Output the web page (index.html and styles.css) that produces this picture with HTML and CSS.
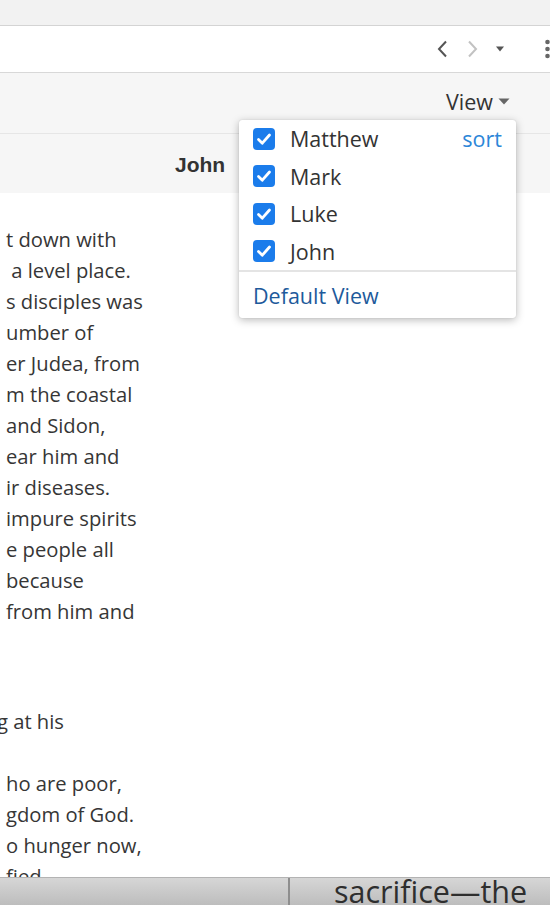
FILE: index.html
```html
<!DOCTYPE html>
<html lang="en">
<head>
<meta charset="utf-8">
<title>Parallel Gospels</title>
<link rel="stylesheet" href="styles.css">
</head>
<body>
<div class="page">
  <div class="topband"></div>
  <div class="toolbar">
    <svg class="nav-prev" width="14" height="18" viewBox="0 0 14 18"><path d="M11 1.5 L4 9 L11 16.5" fill="none" stroke="#555" stroke-width="2"/></svg>
    <svg class="nav-next" width="14" height="18" viewBox="0 0 14 18"><path d="M3 1.5 L10 9 L3 16.5" fill="none" stroke="#c2c2c2" stroke-width="2"/></svg>
    <svg class="nav-caret" width="10" height="6" viewBox="0 0 10 6"><path d="M1 0.5 H9 L5 5.5 Z" fill="#555"/></svg>
    <svg class="kebab" width="6" height="20" viewBox="0 0 6 20"><circle cx="3.5" cy="3" r="2.3" fill="#666"/><circle cx="3.5" cy="10" r="2.3" fill="#666"/><circle cx="3.5" cy="17" r="2.3" fill="#666"/></svg>
  </div>
  <div class="viewbar">
    <button class="view-btn">View <svg width="12" height="7" viewBox="0 0 12 7"><path d="M0.5 0.5 H11.5 L6 6.5 Z" fill="#666"/></svg></button>
    <div class="menu">
      <ul class="menu-list">
        <li class="menu-item"><span class="check"><svg width="22" height="22" viewBox="0 0 22 22"><path d="M5.5 11.5 L9.3 15.2 L16.5 7" fill="none" stroke="#fff" stroke-width="2.8" stroke-linecap="round" stroke-linejoin="round"/></svg></span><span class="label">Matthew</span><a class="sort">sort</a></li>
        <li class="menu-item"><span class="check"><svg width="22" height="22" viewBox="0 0 22 22"><path d="M5.5 11.5 L9.3 15.2 L16.5 7" fill="none" stroke="#fff" stroke-width="2.8" stroke-linecap="round" stroke-linejoin="round"/></svg></span><span class="label">Mark</span></li>
        <li class="menu-item"><span class="check"><svg width="22" height="22" viewBox="0 0 22 22"><path d="M5.5 11.5 L9.3 15.2 L16.5 7" fill="none" stroke="#fff" stroke-width="2.8" stroke-linecap="round" stroke-linejoin="round"/></svg></span><span class="label">Luke</span></li>
        <li class="menu-item"><span class="check"><svg width="22" height="22" viewBox="0 0 22 22"><path d="M5.5 11.5 L9.3 15.2 L16.5 7" fill="none" stroke="#fff" stroke-width="2.8" stroke-linecap="round" stroke-linejoin="round"/></svg></span><span class="label">John</span></li>
      </ul>
      <div class="menu-footer"><a class="default-view">Default View</a></div>
    </div>
  </div>
  <div class="colhead">
    <div class="colhead-cell"></div>
    <div class="colhead-cell colhead-john">John</div>
  </div>
  <main class="content">
    <div class="col col-luke">
      <p class="para"><span class="ln">t down with</span><span class="ln"> a level place.</span><span class="ln">s disciples was</span><span class="ln">umber of</span><span class="ln">er Judea, from</span><span class="ln">m the coastal</span><span class="ln">and Sidon,</span><span class="ln">ear him and</span><span class="ln">ir diseases.</span><span class="ln">impure spirits</span><span class="ln">e people all</span><span class="ln">because</span><span class="ln">from him and</span><span class="ln"></span></p>
      <p class="para"><span class="ln ln-cut">g at his</span><span class="ln"></span><span class="ln">ho are poor,</span><span class="ln">gdom of God.</span><span class="ln">o hunger now,</span><span class="ln">fied</span></p>
    </div>
    <div class="col col-john"></div>
  </main>
</div>
<div class="dock">
  <div class="dock-left"></div>
  <div class="dock-right">sacrifice—the</div>
</div>
</body>
</html>
```
FILE: styles.css
```css
* { box-sizing: border-box; }
html, body { margin: 0; padding: 0; }
body {
  width: 550px;
  height: 905px;
  overflow: hidden;
  font-family: "Open Sans", "Noto Sans", sans-serif;
  color: #333;
  background: #fff;
}
.page {
  height: 877px;
  overflow: hidden;
  display: flex;
  flex-direction: column;
}
.topband {
  height: 26px;
  flex: none;
  background: #f2f2f2;
  border-bottom: 1px solid #d4d4d4;
}
.toolbar {
  height: 47px;
  flex: none;
  background: #fff;
  border-bottom: 1px solid #d8d8d8;
  display: flex;
  align-items: center;
  justify-content: flex-end;
  box-shadow: 0 1px 1px rgba(0,0,0,0.04);
}
.nav-prev { margin-right: 17px; }
.nav-next { margin-right: 15px; }
.nav-caret { margin-right: 39px; }
.kebab { display: block; }
.viewbar {
  position: relative;
  height: 61px;
  flex: none;
  background: #f6f6f6;
  border-bottom: 1px solid #e6e6e6;
  display: flex;
  align-items: center;
  justify-content: flex-end;
  padding-right: 40px;
}
.view-btn {
  font-family: "Open Sans", sans-serif;
  font-size: 21.5px;
  color: #333;
  background: none;
  border: 0;
  padding: 0;
  display: flex;
  align-items: center;
  gap: 5px;
  margin-top: -4px;
}
.view-btn svg { margin-top: 1px; }
.menu {
  position: absolute;
  top: 47px;
  right: 34px;
  width: 277px;
  background: #fff;
  border-radius: 3px;
  box-shadow: 0 2px 8px rgba(0,0,0,0.28), 0 0 1px rgba(0,0,0,0.2);
  z-index: 5;
}
.menu-list {
  list-style: none;
  margin: 0;
  padding: 0;
  border-bottom: 2px solid #e4e4e4;
}
.menu-item {
  height: 37.5px;
  display: flex;
  align-items: center;
  padding: 0 14px;
  font-size: 21.5px;
  color: #333;
}
.check {
  width: 22px;
  height: 22px;
  border-radius: 4px;
  background: #1b7ceb;
  display: block;
  margin-right: 15px;
  flex: none;
}
.check svg { display: block; }
.label { flex: 1; }
.sort {
  color: #2c86d8;
  font-size: 21.5px;
}
.menu-footer {
  height: 46px;
  display: flex;
  align-items: center;
  padding: 0 14px;
}
.default-view {
  color: #1d5a9b;
  font-size: 21.5px;
}
.colhead {
  height: 59px;
  flex: none;
  background: #f6f6f6;
  display: grid;
  grid-template-columns: 150px 1fr;
  align-items: center;
}
.colhead-john {
  font-family: "Liberation Sans", Arial, sans-serif;
  font-weight: bold;
  font-size: 21px;
  color: #333;
  padding-left: 25px;
  margin-top: 2px;
}
.content {
  flex: 1;
  display: grid;
  grid-template-columns: 150px 1fr;
  padding-top: 31px;
}
.col-luke {
  font-size: 20.2px;
  color: #363636;
  padding-left: 6px;
}
.para {
  margin: 0 0 48px 0;
}
.ln {
  display: block;
  white-space: pre;
  height: 31px;
  line-height: 31px;
}
.ln-cut { margin-left: -9px; }
.dock {
  height: 28px;
  display: flex;
  background: linear-gradient(#d6d6d6, #bdbdbd);
  border-top: 1px solid #b3b3b3;
  overflow: hidden;
}
.dock-left {
  width: 290px;
  flex: none;
  border-right: 2px solid #8e8e8e;
}
.dock-right {
  padding-left: 44px;
  font-size: 30.5px;
  line-height: 27px;
  color: #2e2e2e;
  white-space: nowrap;
}
```
